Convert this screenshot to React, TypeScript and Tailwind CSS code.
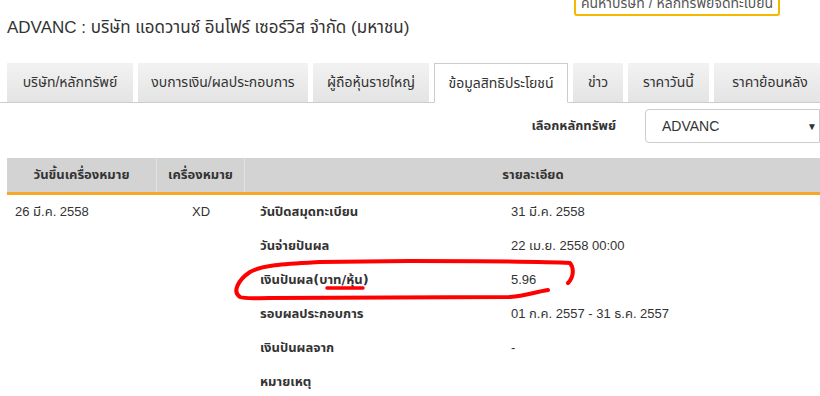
import React from "react";

const tabs = [
  { label: "บริษัท/หลักทรัพย์", w: "w-[126px]" },
  { label: "งบการเงิน/ผลประกอบการ", w: "w-[170px]" },
  { label: "ผู้ถือหุ้นรายใหญ่", w: "w-[116px]" },
  { label: "ข้อมูลสิทธิประโยชน์", w: "w-[134px]", active: true },
  { label: "ข่าว", w: "w-[50px]" },
  { label: "ราคาวันนี้", w: "w-[81px]" },
  { label: "ราคาย้อนหลัง", w: "w-[112px]" },
];

const details = [
  { label: "วันปิดสมุดทะเบียน", value: "31 มี.ค. 2558" },
  { label: "วันจ่ายปันผล", value: "22 เม.ย. 2558 00:00" },
  { label: "เงินปันผล(บาท/หุ้น)", value: "5.96" },
  { label: "รอบผลประกอบการ", value: "01 ก.ค. 2557 - 31 ธ.ค. 2557" },
  { label: "เงินปันผลจาก", value: "-" },
  { label: "หมายเหตุ", value: "" },
];

export default function App() {
  return (
    <div className="relative w-[820px] h-[396px] overflow-hidden bg-white text-[#333] font-['Liberation_Sans','Noto_Sans_Thai','Noto_Sans','DejaVu_Sans',sans-serif]">
      {/* search button, cut off by the top of the window */}
      <div className="flex justify-end pr-[40px] h-[16px]">
        <div className="-mt-[16px] h-[32px] w-[206px] border-2 border-[#f5b800] rounded-[3px] flex items-end justify-center pb-[4px] text-[14px] leading-none text-[#555]">
          ค้นหาบริษัท / หลักทรัพย์จดทะเบียน
        </div>
      </div>

      <h1 className="pl-[7px] pt-[1px] text-[17px] leading-[22px] text-[#333]">
        ADVANC : บริษัท แอดวานซ์ อินโฟร์ เซอร์วิส จำกัด (มหาชน)
      </h1>

      {/* tabs */}
      <div className="mt-[24px] flex gap-[5px] pl-[7px] border-b border-[#ccc] h-[40px]">
        {tabs.map((t) => (
          <div
            key={t.label}
            className={
              t.active
                ? `${t.w} shrink-0 h-[40px] bg-white border border-[#ccc] border-b-white flex items-center justify-center text-[14px] text-[#333]`
                : `${t.w} shrink-0 h-[39px] bg-gradient-to-b from-[#f2f2f2] to-[#e4e4e4] flex items-center justify-center text-[14px] text-[#333]`
            }
          >
            {t.label}
          </div>
        ))}
      </div>

      {/* security selector */}
      <div className="mt-[6px] flex items-center justify-end gap-[29px] h-[34px]">
        <span className="text-[13px] font-bold text-[#333] font-['DejaVu_Sans','Noto_Sans_Thai',sans-serif]">เลือกหลักทรัพย์</span>
        <div className="w-[175px] h-[34px] shrink-0 border border-[#ccc] rounded-l-[4px] flex items-center justify-between pl-[16px] pr-[2px] text-[14px] text-[#333]">
          <span>ADVANC</span>
          <span className="text-[10px]">▼</span>
        </div>
      </div>

      {/* table */}
      <div className="mt-[15px] ml-[7px] w-[814px]">
        <div className="grid grid-cols-[150px_88px_1fr] h-[37px] bg-[#d3d3d3] border-b-[3px] border-[#f6a828] text-[13px] font-bold text-[#333] font-['DejaVu_Sans','Noto_Sans_Thai',sans-serif]">
          <div className="flex items-center justify-center border-r border-[#e2e2e2]">วันขึ้นเครื่องหมาย</div>
          <div className="flex items-center justify-center border-r border-[#e2e2e2]">เครื่องหมาย</div>
          <div className="flex items-center justify-center">รายละเอียด</div>
        </div>
        <div className="grid grid-cols-[150px_88px_1fr] text-[13px]">
          <div className="h-[34px] flex items-center pl-[8px]">26 มี.ค. 2558</div>
          <div className="h-[34px] flex items-center justify-center">XD</div>
          <div className="flex flex-col">
            {details.map((d) => (
              <div key={d.label} className="h-[34px] grid grid-cols-[266px_1fr] items-center">
                <span className="pl-[15px] font-bold font-['DejaVu_Sans','Noto_Sans_Thai',sans-serif]">{d.label}</span>
                <span>{d.value}</span>
              </div>
            ))}
          </div>
        </div>
      </div>

      {/* red marker annotation */}
      <svg className="absolute left-0 top-0 pointer-events-none" width="820" height="396" viewBox="0 0 820 396">
        <path
          d="M568 283 C574 277 574 268 570 263 C540 261 450 261 410 261 L320 262 C285 264 262 265 250 272 C238 280 232 292 240 297 C245 299 255 298 270 298 L510 297 C525 296 535 292 548 290"
          fill="none"
          stroke="#ff0000"
          strokeWidth="4"
          strokeLinecap="round"
          strokeLinejoin="round"
        />
        <path d="M327 288 L363 288" stroke="#ff0000" strokeWidth="3.5" strokeLinecap="round" />
      </svg>
    </div>
  );
}
